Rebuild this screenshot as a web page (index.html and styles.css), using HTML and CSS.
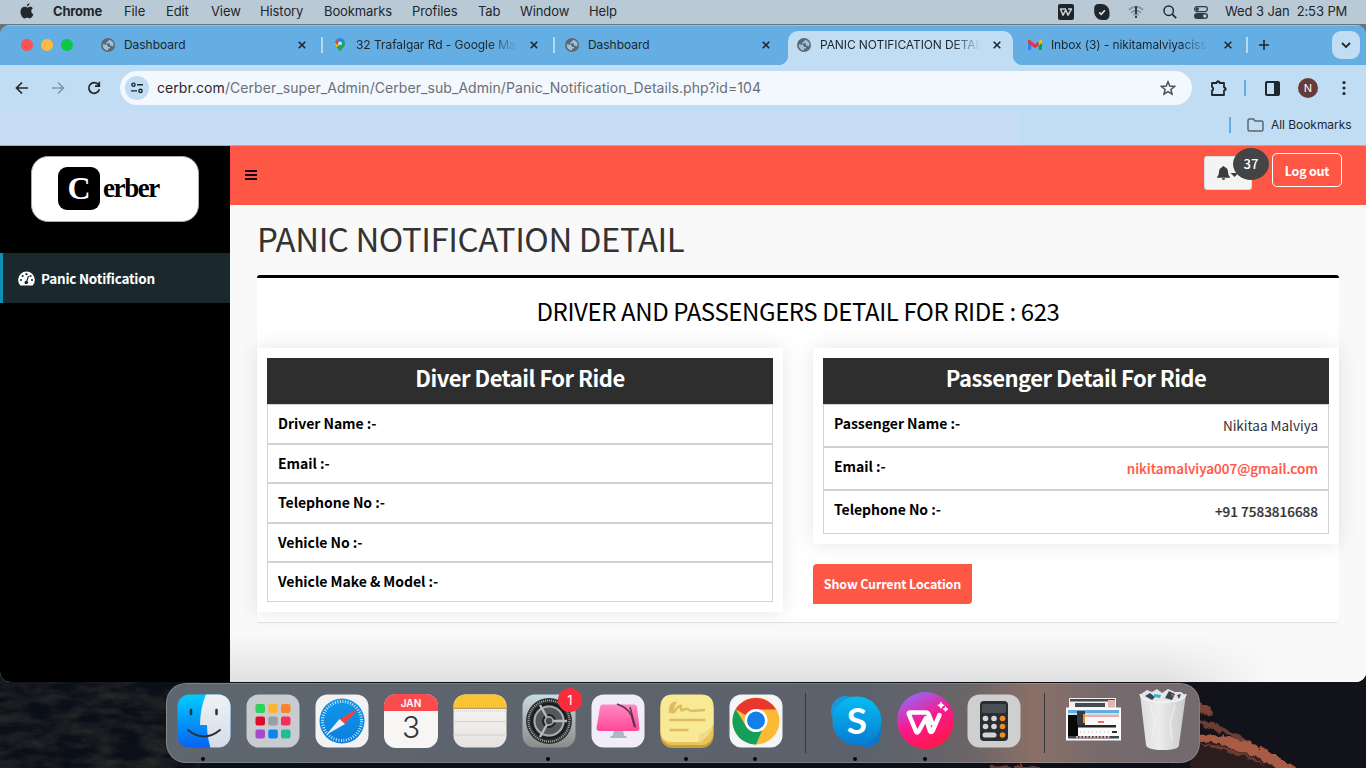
FILE: index.html
```html
<!DOCTYPE html>
<html lang="en">
<head>
<meta charset="utf-8">
<title>Panic Notification Detail</title>
<link rel="stylesheet" href="styles.css">
</head>
<body>
<svg width="0" height="0" class="defs" aria-hidden="true">
  <symbol id="globe" viewBox="0 0 14 14"><circle cx="7" cy="7" r="7" fill="#5f6670"/><path d="M1.500 6.500H5Q7 6.800 7 9H9V10.500H7V12.400Q2 12.200 1.500 6.500zM8 1.700V2.500Q6.500 2.700 6.500 4.200H5V5.600H9V7.700H11.500V9.300Q13.500 6 11.500 3.800 10 2 8 1.700z" fill="#9bc3e2"/></symbol>
  <symbol id="close" viewBox="0 0 8 8"><path d="M.7.7l6.600 6.600M7.300.7L.7 7.300" stroke="#1f262c" stroke-width="1.600" fill="none"/></symbol>
</svg>
<div class="desktop">
  <svg class="wallpaper" viewBox="0 0 1366 98" preserveAspectRatio="none">
    <defs>
      <filter id="rock" x="0" y="0" width="100%" height="100%" color-interpolation-filters="sRGB"><feTurbulence type="fractalNoise" baseFrequency=".035 .09" numOctaves="4" seed="8"/><feColorMatrix values="0 0 0 0 .17  0 0 0 0 .17  0 0 0 0 .16  1.800 0 0 0 -.6"/></filter>
      <filter id="rough" color-interpolation-filters="sRGB"><feTurbulence type="fractalNoise" baseFrequency=".12" numOctaves="3" seed="3"/><feDisplacementMap in="SourceGraphic" scale="8" xChannelSelector="R" yChannelSelector="G"/></filter>
    </defs>
    <rect width="1366" height="98" fill="#0b0f18"/>
    <rect width="200" height="98" filter="url(#rock)"/>
    <rect x="1170" width="196" height="98" fill="#12131a"/>
    <g filter="url(#rough)">
      <path d="M1190 67Q1240 68 1262 84L1290 104H1190Z" fill="#2b1c1d"/>
      <path d="M1195 30Q1212 36 1213 45Q1205 42 1195 40Z" fill="#7c4438"/>
      <path d="M1195 50Q1222 55 1246 68L1260 80Q1238 68 1195 54Z" fill="#6b3c33"/>
      <path d="M1195 64Q1225 65 1246 71Q1264 80 1276 86L1306 104H1288Q1262 88 1240 82Q1222 74 1195 69Z" fill="#a85b45"/>
      <path d="M1195 72Q1240 78 1268 96L1240 86Z" fill="#6b3c33"/>
      <path d="M990 95q20 1 40 1l30 6h-70z" fill="#6b3d30"/>
    </g>
  </svg>

  <header class="menubar">
    <svg class="apple" viewBox="0 0 14 16"><path d="M9.500.2c.1 1.300-1.200 3-2.700 3.100C6.600 1.900 8.100.4 9.500.2zM12.900 5.300c-2.500 1.600-2 4.800.5 5.900-.7 2-2 4.200-3.600 4.200-1 0-1.400-.6-2.600-.6s-1.700.6-2.600.6C2.500 15.400.5 11.700.5 8.700c0-3.300 2.100-4.900 4-4.900 1.200 0 2.100.7 2.800.7s1.700-.8 3.100-.8c1 0 1.900.6 2.500 1.600z" fill="#23282c"/></svg>
    <nav class="menus"><b>Chrome</b><span>File</span><span>Edit</span><span>View</span><span>History</span><span>Bookmarks</span><span>Profiles</span><span>Tab</span><span>Window</span><span>Help</span></nav>
    <div class="status">
      <svg width="16" height="16" viewBox="0 0 16 16"><rect width="16" height="16" rx="2" fill="#20252a"/><path d="M8 5H2.500L5 11.200 7.800 6 10 11.200 13.500 5H10" fill="none" stroke="#c6d2dc" stroke-width="1.500" stroke-linejoin="round"/></svg>
      <svg width="16" height="16" viewBox="0 0 16 16"><path d="M4.500 0H8A8 8 0 0 1 15.500 8V11.500A4.500 4.500 0 0 1 11 16H8A8 8 0 0 1 .2 8.500V4.500A4.500 4.500 0 0 1 4.500 0z" fill="#20252a"/><path d="M5.300 8.300l2 2 3.600-4" stroke="#d5dee5" stroke-width="1.700" fill="none"/></svg>
      <svg width="16" height="13" viewBox="0 0 16 13"><path d="M.8 4a10 10 0 0 1 14.400 0M3 6.800a7 7 0 0 1 10 0M5.500 9a4 4 0 0 1 5 0" fill="none" stroke="#8997a2" stroke-width="1.700"/><path d="M8 0v8M8 9.800v2.200" stroke="#343b41" stroke-width="2"/></svg>
      <svg width="14" height="14" viewBox="0 0 14 14"><circle cx="5.700" cy="5.700" r="4.700" fill="none" stroke="#252b30" stroke-width="1.500"/><path d="M9.200 9.200l4 4" stroke="#252b30" stroke-width="1.800"/></svg>
      <svg width="14" height="13" viewBox="0 0 14 13"><rect x=".6" y=".6" width="12.800" height="5" rx="2.500" fill="none" stroke="#343b41" stroke-width="1.200"/><circle cx="3.200" cy="3.100" r="1.800" fill="#343b41"/><rect y="7" width="14" height="6" rx="3" fill="#343b41"/><circle cx="10.800" cy="10" r="1.700" fill="#bac9d5"/></svg>
      <span class="clock">Wed 3 Jan&nbsp; 2:53 PM</span>
    </div>
  </header>

  <main class="window">
    <div class="tabs">
      <div class="lights"><i class="red"></i><i class="amber"></i><i class="green"></i></div>
      <div class="tab"><svg class="fav"><use href="#globe"/></svg><span>Dashboard</span><svg class="x"><use href="#close"/></svg></div>
      <i class="sep"></i>
      <div class="tab"><svg class="fav" viewBox="0 0 14 16"><path d="M7 16C6.500 13 1.200 11 1.200 6A5.800 5.800 0 0 1 12.800 6C12.800 11 7.500 13 7 16z" fill="#21a65a"/><path d="M1.200 6A5.800 5.800 0 0 1 3 2L7.500 6 3.500 10.500C2 9 1.200 7.800 1.200 6z" fill="#fbbc04"/><path d="M3 1.600l4 4L4 8 1.200 5.500A6 6 0 0 1 3 1.600z" fill="#e94335"/><path d="M3 1.600A6 6 0 0 1 12 3L6 8z" fill="#2784f4"/><circle cx="7" cy="6" r="2.100" fill="#c5e4f7"/></svg><span class="fade">32 Trafalgar Rd - Google Map</span><svg class="x"><use href="#close"/></svg></div>
      <i class="sep"></i>
      <div class="tab"><svg class="fav"><use href="#globe"/></svg><span>Dashboard</span><svg class="x"><use href="#close"/></svg></div>
      <div class="tab active"><svg class="fav"><use href="#globe"/></svg><span class="fade">PANIC NOTIFICATION DETAIL</span><svg class="x"><use href="#close"/></svg></div>
      <div class="tab gmail"><svg class="fav" viewBox="0 0 14 12"><path d="M0 1.500v9.500h3.300V5z" fill="#2684fc"/><path d="M14 1.500v9.500h-3.300V5z" fill="#00ac47"/><path d="M10.700 2.500L12.500.8A1 1 0 0 1 14 1.500V4l-3.300 2.500z" fill="#ffba00"/><path d="M0 1.500A1 1 0 0 1 1.500.8L7 5.200 10.700 2.200v4.300L7 9.300 0 4z" fill="#ea3343"/></svg><span class="fade">Inbox (3) - nikitamalviyacisso</span><svg class="x"><use href="#close"/></svg></div>
      <i class="sep"></i>
      <svg class="plus" viewBox="0 0 12 12"><path d="M6 1v10M1 6h10" stroke="#1f262c" stroke-width="1.600"/></svg>
      <div class="tabsearch"><svg width="10" height="7" viewBox="0 0 10 7"><path d="M1 1l4 4 4-4" fill="none" stroke="#1f262c" stroke-width="1.800"/></svg></div>
    </div>

    <div class="toolbar">
      <svg class="nav" viewBox="0 0 14 14"><path d="M13 7H2M7 1.500L1.500 7 7 12.500" fill="none" stroke="#1f262c" stroke-width="1.700"/></svg>
      <svg class="nav" viewBox="0 0 14 14"><path d="M1 7h11M7 1.500L12.500 7 7 12.500" fill="none" stroke="#8597a6" stroke-width="1.700"/></svg>
      <svg class="nav" viewBox="0 0 14 14"><path d="M11.500 4A5.300 5.300 0 1 0 12.300 8.200M12.300.8v4.400H8" fill="none" stroke="#1f262c" stroke-width="1.700"/></svg>
      <div class="omnibox">
        <span class="siteinfo"><svg width="12" height="12" viewBox="0 0 12 12" fill="none" stroke="#1f262c" stroke-width="1.400"><circle cx="2.500" cy="2.700" r="1.600"/><path d="M6 2.700h6M0 8.900h6"/><circle cx="9.500" cy="8.900" r="1.600"/></svg></span>
        <span class="url"><b>cerbr.com</b>/Cerber_super_Admin/Cerber_sub_Admin/Panic_Notification_Details.php?id=104</span>
        <svg class="star" viewBox="0 0 16 16"><path d="M8 1.800l1.800 4.300 4.700.4-3.600 3 1.100 4.600L8 11.600 4 14.100l1.100-4.600-3.600-3 4.700-.4z" fill="none" stroke="#4a5057" stroke-width="1.500"/></svg>
      </div>
      <svg class="puzzle" viewBox="0 0 18 18"><path d="M2 4h4.500a1.600 1.600 0 0 1 3.200 0H14v4.400a1.600 1.600 0 0 1 0 3.200V16H2v-4.300a2 2 0 0 0 0-3.700z" fill="none" stroke="#1f262c" stroke-width="1.800" stroke-linejoin="round"/><path d="M6 3.500a2 2 0 0 1 4 0zM14.500 8a2 2 0 0 1 0 4z" fill="#1f262c"/></svg>
      <i class="bluesep"></i>
      <svg class="panelicon" viewBox="0 0 15 15"><rect x="1" y="1" width="13" height="13" rx="1" fill="none" stroke="#1f262c" stroke-width="2"/><path d="M9 1h5v13H9z" fill="#1f262c"/></svg>
      <span class="avatar">N</span>
      <svg class="dots" viewBox="0 0 4 16"><g fill="#1f262c"><circle cx="2" cy="2.500" r="1.600"/><circle cx="2" cy="8" r="1.600"/><circle cx="2" cy="13.500" r="1.600"/></g></svg>
    </div>
    <div class="bookmarks"><i class="bluesep"></i><svg width="17" height="14" viewBox="0 0 17 14"><path d="M1 2.500Q1 1 2.500 1H6.500L8 3H14.500Q16 3 16 4.500V11.500Q16 13 14.500 13H2.500Q1 13 1 11.500z" fill="none" stroke="#5c6670" stroke-width="1.500"/></svg><span>All Bookmarks</span></div>

    <div class="page">
      <aside class="sidebar">
        <div class="brand"><span class="mark">C</span><span class="rest">erber</span></div>
        <a class="side-link"><svg width="17" height="15" viewBox="0 0 17 15"><path d="M2 14A8.300 8.300 0 1 1 15 14Q14.800 14.500 14 14.500H3Q2.300 14.500 2 14z" fill="#fff"/><g fill="#1b292e"><circle cx="3" cy="9" r="1.100"/><circle cx="4.700" cy="5" r="1.100"/><circle cx="8.500" cy="3.200" r="1.100"/><circle cx="12.500" cy="5" r="1.100"/><circle cx="14" cy="9" r="1.100"/></g><path d="M10.500 5L8.500 11" stroke="#1b292e" stroke-width="1.200"/><circle cx="8.300" cy="11.500" r="1.800" fill="#1b292e"/></svg><span>Panic Notification</span></a>
      </aside>
      <section class="main">
        <div class="topbar">
          <svg class="burger" viewBox="0 0 12 10"><path d="M0 1.100h12M0 5h12M0 8.900h12" stroke="#1b0805" stroke-width="2"/></svg>
          <div class="bell"><svg width="22" height="14" viewBox="0 0 22 14"><path d="M6.500 0q1 0 1 1Q11 2 11 6q0 3.500 2 5v.7H0V11q2-1.500 2-5 0-4 3.500-5 0-1 1-1zM4.800 12.300h3.400Q8 14 6.500 14T4.800 12.300zM13.500 7h8l-4 4z" fill="#3c3c3c"/></svg><span class="count">37</span></div>
          <a class="logout">Log out</a>
        </div>
        <div class="content">
          <h1>PANIC NOTIFICATION DETAIL</h1>
          <div class="box">
            <h2>DRIVER AND PASSENGERS DETAIL FOR RIDE : 623</h2>
            <div class="cols">
              <div class="card driver">
                <h3>Diver Detail For Ride</h3>
                <div class="row"><b>Driver Name :-</b></div>
                <div class="row"><b>Email :-</b></div>
                <div class="row"><b>Telephone No :-</b></div>
                <div class="row"><b>Vehicle No :-</b></div>
                <div class="row"><b>Vehicle Make &amp; Model :-</b></div>
              </div>
              <div>
                <div class="card passenger">
                  <h3>Passenger Detail For Ride</h3>
                  <div class="row"><b>Passenger Name :-</b><span>Nikitaa Malviya</span></div>
                  <div class="row"><b>Email :-</b><span class="mail">nikitamalviya007@gmail.com</span></div>
                  <div class="row"><b>Telephone No :-</b><span class="phone">+91 7583816688</span></div>
                </div>
                <a class="show">Show Current Location</a>
              </div>
            </div>
          </div>
        </div>
      </section>
    </div>
  </main>

  <footer class="dock">
    <div class="app on"><svg viewBox="0 0 54 54"><defs><linearGradient id="fb" x2="0" y2="1"><stop stop-color="#02cdfd"/><stop offset="1" stop-color="#0662f3"/></linearGradient><linearGradient id="fw" x2="0" y2="1"><stop stop-color="#f0f1f5"/><stop offset="1" stop-color="#d3dde9"/></linearGradient><clipPath id="r"><rect x=".5" y=".5" width="53" height="53" rx="12"/></clipPath></defs><g clip-path="url(#r)"><path d="M0 0h54v54H0z" fill="url(#fb)"/><path d="M29 0Q23 15 23 31h7q0 11 3.500 23H54V0z" fill="url(#fw)"/></g><path d="M14 16v4M39.500 16v4" stroke="#26313b" stroke-width="2.500" stroke-linecap="round"/><path d="M11 36Q27 49 43 36" fill="none" stroke="#26313b" stroke-width="2" stroke-linecap="round"/></svg></div>
    <div class="app"><svg viewBox="0 0 54 54"><rect x=".5" y=".5" width="53" height="53" rx="12" fill="#c8cbd0"/><g><rect x="9.500" y="10" width="9.500" height="9" rx="2" fill="#2fd158"/><rect x="22.300" y="10" width="9.500" height="9" rx="2" fill="#fbb534"/><rect x="35" y="10" width="9.500" height="9" rx="2" fill="#fb8429"/><rect x="9.500" y="22.500" width="9.500" height="9" rx="2" fill="#dd0c27"/><rect x="22.300" y="22.500" width="9.500" height="9" rx="2" fill="#97a0a6"/><rect x="35" y="22.500" width="9.500" height="9" rx="2" fill="#f92f5b"/><rect x="9.500" y="35.500" width="9.500" height="9" rx="2" fill="#a44bcc"/><rect x="22.300" y="35.500" width="9.500" height="9" rx="2" fill="#0a84ee"/><rect x="35" y="35.500" width="9.500" height="9" rx="2" fill="#1bbf91"/></g></svg></div>
    <div class="app"><svg viewBox="0 0 54 54"><defs><linearGradient id="sb" x2="0" y2="1"><stop stop-color="#1297e8"/><stop offset="1" stop-color="#0a7fdf"/></linearGradient></defs><rect x=".5" y=".5" width="53" height="53" rx="12" fill="#f2f2f2"/><circle cx="27" cy="27" r="22.500" fill="url(#sb)"/><circle cx="27" cy="27" r="19.500" fill="none" stroke="#d5edfb" stroke-width="3" stroke-dasharray=".9 1.650"/><path d="M43.500 14L30 30l-5-5z" fill="#f3423d"/><path d="M11 41l13.500-16 5.500 5z" fill="#eef0f4"/></svg></div>
    <div class="app calendar"><span>JAN</span><b>3</b></div>
    <div class="app"><svg viewBox="0 0 54 54"><defs><linearGradient id="np" x2="0" y2="1"><stop stop-color="#fafafa"/><stop offset="1" stop-color="#e6e1de"/></linearGradient></defs><g clip-path="url(#r)"><path d="M0 0h54v54H0z" fill="url(#np)"/><path d="M0 0h54v14H0z" fill="#fcc434"/><path d="M0 14.300h54" stroke="#a58a46"/><path d="M1 17h54" stroke="#c5c5c3" stroke-dasharray="1 1"/><path d="M0 27.500h54M0 41h54" stroke="#d2cfcd"/></g></svg></div>
    <div class="app on"><svg viewBox="0 0 54 54"><defs><linearGradient id="sg" x2="0" y2="1"><stop stop-color="#c8dbe3"/><stop offset="1" stop-color="#8c8b89"/></linearGradient></defs><rect x=".5" y=".5" width="53" height="53" rx="12" fill="url(#sg)"/><circle cx="27" cy="27" r="23" fill="#2c2f31"/><circle cx="27" cy="27" r="20.500" fill="none" stroke="#a2a5a6" stroke-width="2" stroke-dasharray="1 1"/><circle cx="27" cy="27" r="17" fill="#3b3e40" stroke="#191b1c" stroke-width="2"/><circle cx="27" cy="27" r="14.500" fill="#55585a" stroke="#a9acad" stroke-width="2"/><circle cx="27" cy="27" r="6" fill="#55585a" stroke="#222" stroke-width="2"/><path d="M31 27h14M25 23.500L18 11M25 30.500L18 43" stroke="#b8bbbc" stroke-width="2.400"/><circle cx="27" cy="27" r="4" fill="#464a4d" stroke="#adb0b1" stroke-width="1.500"/></svg><em>1</em></div>
    <div class="app"><svg viewBox="0 0 54 54"><defs><linearGradient id="cm" x2="0" y2="1"><stop stop-color="#ff8ac2"/><stop offset="1" stop-color="#ff4897"/></linearGradient></defs><rect x=".5" y=".5" width="53" height="53" rx="12" fill="#f0edf9"/><path d="M23 37h9l1.500 5h2v2h-16v-2h2z" fill="#aeb6c9"/><path d="M9 13q0-2 3-2.500h31q3 .5 3 2.500l2.500 21q0 3-3 3h-37q-3 0-3-3z" fill="url(#cm)"/><path d="M26 10q11 4 14 11M39 13l5.500 20.500M40 20l3.500 13" fill="none" stroke="#613252" stroke-width="1.500"/></svg></div>
    <div class="app on"><svg viewBox="0 0 54 54"><rect x=".5" y="4" width="53" height="50" rx="12" fill="#c49e3b"/><rect x=".5" y="2" width="53" height="49" rx="12" fill="#e8c45d"/><path d="M.5 13Q.5.5 13 .5H41Q53.500.5 53.500 13V30Q45 48 38 48H12Q.5 48 .5 36z" fill="#fae994"/><path d="M38 48Q39 41 39 40 47 39 53.500 30 51 43 38 48z" fill="#f0d987"/><path d="M10 19Q10 9 15 9 10 20 14 18 19 11 21 12 20 19 25 15 27 14 31 17L45 16M9.500 26h36M9.500 36h19" fill="none" stroke="#dcbd62" stroke-width="2.600"/></svg></div>
    <div class="app on"><svg viewBox="0 0 54 54"><rect x=".5" y=".5" width="53" height="53" rx="12" fill="#f5f5f5"/><circle cx="27" cy="27" r="23.500" fill="#faba35"/><path d="M27 27L6.600 15.300A23.500 23.500 0 0 1 47 15.500H27z" fill="#e8382e"/><path d="M27 50.500A23.500 23.500 0 0 1 6.600 15.300L17.500 33Q23 40 33 36.500z" fill="#14a05a"/><circle cx="27" cy="26.500" r="11.500" fill="#fff"/><circle cx="27" cy="26.500" r="9" fill="#137fe8"/></svg></div>
    <i class="rule"></i>
    <div class="app on"><svg viewBox="0 0 54 54"><defs><linearGradient id="sk" x2="0" y2="1"><stop stop-color="#05bdf2"/><stop offset="1" stop-color="#087ad2"/></linearGradient></defs><circle cx="17" cy="17" r="15" fill="#1599dc"/><circle cx="38" cy="39" r="14" fill="#0c76cd"/><circle cx="28" cy="27" r="24.500" fill="url(#sk)"/><text x="28" y="40" class="s">S</text></svg></div>
    <div class="app on wide"><svg viewBox="0 0 57 57"><defs><linearGradient id="wp" x1=".2" x2=".7" y2="1"><stop stop-color="#8c6dff"/><stop offset=".5" stop-color="#fa188d"/><stop offset="1" stop-color="#ff1944"/></linearGradient></defs><circle cx="28.500" cy="28.500" r="28.500" fill="url(#wp)"/><path d="M35 31l-3-8q-1-2.500-3-2.500H13q-2 0-1 2l7 17q1 2 2.500 0L29 26l4 13q1 2 2.500 0l7-16" fill="none" stroke="#fff" stroke-width="4.500" stroke-linejoin="round" stroke-linecap="round"/><path d="M44 9q1 4 4 4-3 1-4 4-1-3-4-4 3 0 4-4zM48.500 14q1 3 3 3-2 1-3 3-1-2-3-3 2 0 3-3z" fill="#fff"/></svg></div>
    <div class="app"><svg viewBox="0 0 54 54"><rect x=".5" y=".5" width="53" height="53" rx="12" fill="#cfcfcf"/><rect x="13" y="7" width="28" height="40" rx="4" fill="#2a2d31"/><rect x="15" y="10" width="24" height="9" rx="1.500" fill="#4a5056"/><g fill="#d5d5d5"><circle cx="18.500" cy="24.500" r="2.800"/><circle cx="27" cy="24.500" r="2.800"/><circle cx="18.500" cy="32.500" r="2.800"/><circle cx="27" cy="32.500" r="2.800"/><rect x="15.500" y="38.500" width="14" height="5" rx="2.500"/></g><g fill="#f58b1e"><circle cx="35.500" cy="24.500" r="2.800"/><circle cx="35.500" cy="32.500" r="2.800"/><circle cx="35.500" cy="41" r="2.800"/></g></svg></div>
    <i class="rule last"></i>
    <div class="app minis"><svg viewBox="0 0 56 54"><path d="M3 4h47v12H3z" fill="#f0f0f0"/><path d="M4 5h45v2.500H4zM9 9h30v4H9z" fill="#464b50"/><path d="M42 6h7v8h-7z" fill="#e9b1b0"/><path d="M0 13.500h55v33H0z" fill="#fafafa"/><path d="M2 16h51v3H2z" fill="#68acdf"/><path d="M2 19h51v2H2z" fill="#c4dff3"/><path d="M2 21h10v21H2z" fill="#090909"/><path d="M12 21h41v2H12z" fill="#f3a89d"/><path d="M11 17h8v14h-8z" fill="#37393b"/><path d="M17 20h2v9h-2z" fill="#ef8c2b"/><path d="M32 27h6v2h-6z" fill="#f56c59"/><path d="M12 31h38v2.500H12z" fill="#25272a"/><path d="M14 38h30" stroke="#b5b5b5" stroke-dasharray="1 3"/><path d="M46 37h5v2h-5z" fill="#333"/><path d="M2 42h51v2.500H2z" fill="#3d4653"/><path d="M10 43h35" stroke="#e5a7a0" stroke-width="2" stroke-dasharray="2 1.500"/></svg></div>
    <div class="app trash"><svg viewBox="0 0 48 62"><defs><linearGradient id="tr"><stop stop-color="#ddd"/><stop offset=".4" stop-color="#ececec"/><stop offset="1" stop-color="#c9c9ca"/></linearGradient></defs><path d="M1 5L7 56Q8 61 24 61T40 56L47 5Q24 15 1 5z" fill="url(#tr)"/><path d="M2 5L8 1 13 3 18 0 23 4 29 0 36 3 42 3 46 6Q42 12 24 12T2 5z" fill="#e3e5e6"/><path d="M6 7l5-3 5 4-3 3zM26 9l4-7 6 3-3 6zM38 6l4-1-2 5z" fill="#394856"/><path d="M15 5l7 1-1 3-6-1z" fill="#33b7c4"/><path d="M32 4l3 2-2 2z" fill="#c55a3e"/><path d="M1 5Q3 13 24 13T47 5" fill="none" stroke="#f3f3f3" stroke-width="1.500"/><path d="M12 17l4 16-3 16M36 16l-5 18 2 18" stroke="#f5f5f5" fill="none" stroke-width="1.500" opacity=".6"/></svg></div>
  </footer>
</div>
</body>
</html>
```
FILE: styles.css
```css
* { box-sizing: border-box; }
body { margin: 0; font-family: Inter, "Liberation Sans", sans-serif; overflow: hidden; }
.defs { position: absolute; }
svg { display: block; flex: none; }
.desktop { position: relative; display: flex; flex-direction: column; width: 1366px; height: 768px; background: #68747e; overflow: hidden; }
.wallpaper { position: absolute; left: 0; top: 670px; width: 1366px; height: 98px; }

.menubar { display: flex; align-items: center; height: 24px; flex: none; background: #bac9d6; color: #20262b; font-size: 13px; line-height: 23px; white-space: nowrap; }
.apple { width: 14px; height: 16px; margin: 0 19px 2px 20px; }
.menus { display: grid; grid-template-columns: 71px 42px 45px 49px 64px 88px 66px 42px 69px 40px; height: 24px; letter-spacing: -.1px; }
.menus b { letter-spacing: -.2px; }
.status { display: flex; align-items: center; margin-left: auto; margin-right: 19px; }
.status svg { margin-right: 20px; }
.status svg:nth-of-type(2) { margin-right: 18px; }
.status svg:nth-of-type(3) { margin-right: 19px; }
.status svg:nth-of-type(4) { margin-right: 17px; }
.status svg:nth-of-type(5) { margin-right: 17px; }
.clock { width: 122px; height: 24px; letter-spacing: -.1px; }

.window { position: relative; display: flex; flex-direction: column; width: 1366px; height: 657px; margin-top: 1px; border-radius: 10px; overflow: hidden; flex: none; background: #c0ddf4; }
.tabs { display: flex; align-items: center; height: 40px; padding-bottom: 1px; flex: none; background: #64aee4; border-top: 1px solid #8ac4ec; font-size: 12px; color: #1f262c; }
.lights { display: flex; flex: none; gap: 8px; margin-left: 21px; width: 72px; }
.lights i { width: 12px; height: 12px; border-radius: 50%; }
.red { background: #fe4f57; } .amber { background: #febb40; } .green { background: #0ac945; }
.tab { display: flex; flex: none; align-items: center; width: 226px; height: 34px; padding-left: 8px; white-space: nowrap; }
.tab .fav { width: 14px; height: 14px; margin-right: 9px; }
.tab span { width: 166px; overflow: hidden; letter-spacing: -.05px; line-height: 18px; }
.tab .x { width: 8px; height: 8px; margin-left: 8px; }
.fade { -webkit-mask-image: linear-gradient(90deg, #000 80%, transparent 97%); mask-image: linear-gradient(90deg, #000 80%, transparent 97%); }
.sep { flex: none; width: 2px; height: 16px; background: #b5daf4; margin: 0 2px; }
.tab.active { position: relative; align-self: flex-end; height: 34px; margin: 0 0 -1px 5px; padding: 0 0 6px 9px; width: 225px; background: #c0ddf4; border-radius: 10px 10px 0 0; }
.tab.active span { letter-spacing: -.1px; }
.tab.active .x { margin-left: 7px; }
.tab.active::before, .tab.active::after { content: ""; position: absolute; bottom: 0; width: 10px; height: 10px; }
.tab.active::before { left: -10px; background: radial-gradient(circle at 0 0, transparent 10px, #c0ddf4 10.5px); }
.tab.active::after { right: -10px; background: radial-gradient(circle at 100% 0, transparent 10px, #c0ddf4 10.5px); }
.tab.gmail { width: 231px; padding-left: 15px; }
.gmail .fav { height: 12px; }
.tab.gmail span { width: 162px; letter-spacing: -.12px; }
.tab.gmail .x { margin-left: 11px; }
.plus { width: 12px; height: 12px; margin-left: 8px; }
.tabsearch { display: grid; place-items: center; width: 28px; height: 28px; margin-left: auto; margin-right: 6px; border-radius: 9px; background: #c0ddf4; }

.toolbar { display: flex; align-items: center; height: 46px; flex: none; padding-left: 15px; }
.nav { width: 14px; height: 14px; margin-right: 22px; }
.omnibox { display: flex; flex: none; align-items: center; width: 1072px; height: 34px; margin-left: -3px; padding-left: 5px; background: #f3f7fe; border-radius: 17px; }
.siteinfo { display: grid; place-items: center; width: 24px; height: 24px; border-radius: 50%; background: #c0ddf4; }
.url { width: 1010px; margin: -1px 0 0 8px; font-size: 14px; letter-spacing: .065px; color: #6a6f76; white-space: nowrap; }
.url b { font-weight: 400; color: #1f262c; }
.star { width: 16px; height: 16px; margin-left: -7px; }
.puzzle { width: 18px; height: 18px; margin: 0 16px 0 18px; }
.bluesep { width: 2px; height: 16px; background: #64aee4; flex: none; }
.panelicon { width: 15px; height: 15px; margin-left: 19px; }
.avatar { width: 20px; height: 20px; margin: 0 24px 0 18px; border-radius: 50%; background: #673b37; color: #fff; font-size: 11px; line-height: 20px; text-align: center; flex: none; }
.dots { width: 4px; height: 16px; }
.bookmarks { display: flex; align-items: center; justify-content: flex-end; height: 35px; flex: none; padding: 0 15px 7px 0; background: linear-gradient(90deg, #c7dcf5 1020px, #c0ddf4 1020px); border-bottom: 1px solid #8fb4d0; font-size: 12px; color: #1f262c; }
.bookmarks svg { margin: 0 7px 0 16px; }
.bookmarks span { width: 80px; letter-spacing: -.05px; white-space: nowrap; }

.page { display: flex; flex: 1; font-family: "Noto Sans CJK SC", "Noto Sans CJK JP", sans-serif; }
.sidebar { width: 230px; flex: none; background: #000; }
.brand { display: flex; align-items: center; width: 168px; height: 66px; margin: 10px 0 31px 31px; padding: 0 0 1px 26px; background: #fff; border: 1px solid #aaa; border-radius: 17px; font-family: "Liberation Serif", serif; font-weight: 700; }
.mark { width: 42px; height: 43px; border-radius: 9px; background: #000; color: #fff; font-size: 32px; line-height: 43px; text-align: center; }
.rest { margin-left: 3px; font-size: 27px; letter-spacing: -1.400px; }
.side-link { display: flex; align-items: center; gap: 6px; height: 50px; padding-left: 15px; border-left: 3px solid #0f8fb8; background: #1b292e; color: #fff; font-size: 13.500px; font-weight: 700; letter-spacing: -.23px; white-space: nowrap; }
.main { flex: 1; display: flex; flex-direction: column; background: #f9f9f9; }
.topbar { display: flex; align-items: flex-start; height: 59px; padding-right: 24px; background: #ff5745; }
.burger { width: 12px; height: 10px; margin: 24px auto 0 15px; }
.bell { position: relative; width: 48px; height: 34px; margin: 10px 20px 0 0; padding: 9px 0 0 12px; background: #f4f4f4; border: 1px solid #ddd; border-radius: 3px; }
.count { position: absolute; left: 28px; top: -9px; width: 36px; height: 32px; border-radius: 50%; background: #444; color: #fff; font-size: 13px; font-weight: 500; line-height: 32px; text-align: center; }
.logout { width: 70px; height: 34px; margin-top: 7px; border: 1px solid #fff; border-radius: 5px; color: #fff; font-size: 12.500px; font-weight: 700; line-height: 33px; letter-spacing: -.25px; text-align: center; }
.content { flex: 1; padding: 8px 27px 0; background: linear-gradient(90deg, rgba(249,249,249,0) 82%, #f9f9f9 92%), linear-gradient(#f9f9f9 90%, #e0e0e0); }
h1, h2, h3 { margin: 0; font-weight: 400; white-space: nowrap; }
h1 { height: 62px; color: #333; font-size: 33px; line-height: 50px; letter-spacing: -.44px; }
.box { height: 347px; background: #fff; border-top: 3px solid #000; border-radius: 3px; box-shadow: 0 1px 1px rgba(0,0,0,.1); }
h2 { height: 70px; color: #000; font-size: 24px; line-height: 66px; text-align: center; letter-spacing: -.4px; }
.cols { display: grid; grid-template-columns: 526px 526px; gap: 30px; align-items: start; }
.card { padding: 10px; background: #fff; box-shadow: 0 0 20px rgba(0,0,0,.1); }
h3 { height: 46px; background: #2e2e2e; color: #fff; font-size: 22px; font-weight: 700; line-height: 39px; text-align: center; letter-spacing: -.52px; }
.row { display: flex; justify-content: space-between; height: 39.500px; padding: 0 10px; border: 1px solid #d2d2d2; color: #333; font-size: 13.500px; line-height: 37px; white-space: nowrap; }
.row b { color: #000; font-size: 14px; font-weight: 700; letter-spacing: -.04px; }
.passenger .row { height: 43.200px; }
.row span { line-height: 40px; }
.row .mail { color: #ff5745; font-weight: 500; -webkit-text-stroke: .2px; }
.row .phone { font-weight: 500; -webkit-text-stroke: .2px; }
.show { display: block; width: 159px; height: 40px; margin-top: 20px; border-radius: 4px 0; background: #ff5745; color: #fff; font-size: 12.500px; font-weight: 700; line-height: 40px; letter-spacing: -.16px; text-align: center; white-space: nowrap; }

.dock { position: absolute; left: 166px; top: 683px; display: flex; align-items: flex-start; width: 1034px; height: 80px; padding: 10px 0 0 10px; border: 1px solid rgba(255,255,255,.18); border-radius: 20px; background: linear-gradient(90deg, #5e666f 0, #5c626c 68%, #6b6568 78%, #8a7068 84%, #766a6c 91%, #726a6d); }
.app { position: relative; width: 54px; height: 54px; margin-right: 15px; flex: none; }
.app > svg { width: 54px; height: 54px; }
.on::after { content: ""; position: absolute; left: 24px; top: 63px; width: 4px; height: 4px; border-radius: 50%; background: #050505; }
.calendar { display: flex; flex-direction: column; align-items: center; height: 54px; border-radius: 12px; background: #f7f6f4; overflow: hidden; color: #333; }
.calendar span { width: 54px; height: 17px; background: #fc4b4f; color: #fff; font-size: 10px; font-weight: 600; line-height: 18px; text-align: center; flex: none; }
.calendar b { font-size: 30px; font-weight: 300; line-height: 32px; }
.app em { position: absolute; left: 36px; top: -6px; width: 24px; height: 24px; border-radius: 50%; background: #fb2c3b; color: #fff; font-size: 13px; font-style: normal; line-height: 24px; text-align: center; }
.rule { flex: none; width: 1px; height: 60px; margin: -1px 23px 0 7px; background: #33383f; }
.s { font: 700 37px Lato, sans-serif; fill: #fff; text-anchor: middle; }
.app.wide { width: 57px; margin: -2px 13px 0 -1px; }
.wide > svg { width: 57px; height: 57px; }
.app.wide::after { left: 26px; top: 65px; }
.rule.last { margin: -1px 21px 0 8px; }
.app.minis { width: 56px; margin-right: 17px; }
.minis > svg { width: 56px; }
.app.trash { margin: -5px 0 0; }
.app.trash > svg { width: 48px; height: 62px; }
```
